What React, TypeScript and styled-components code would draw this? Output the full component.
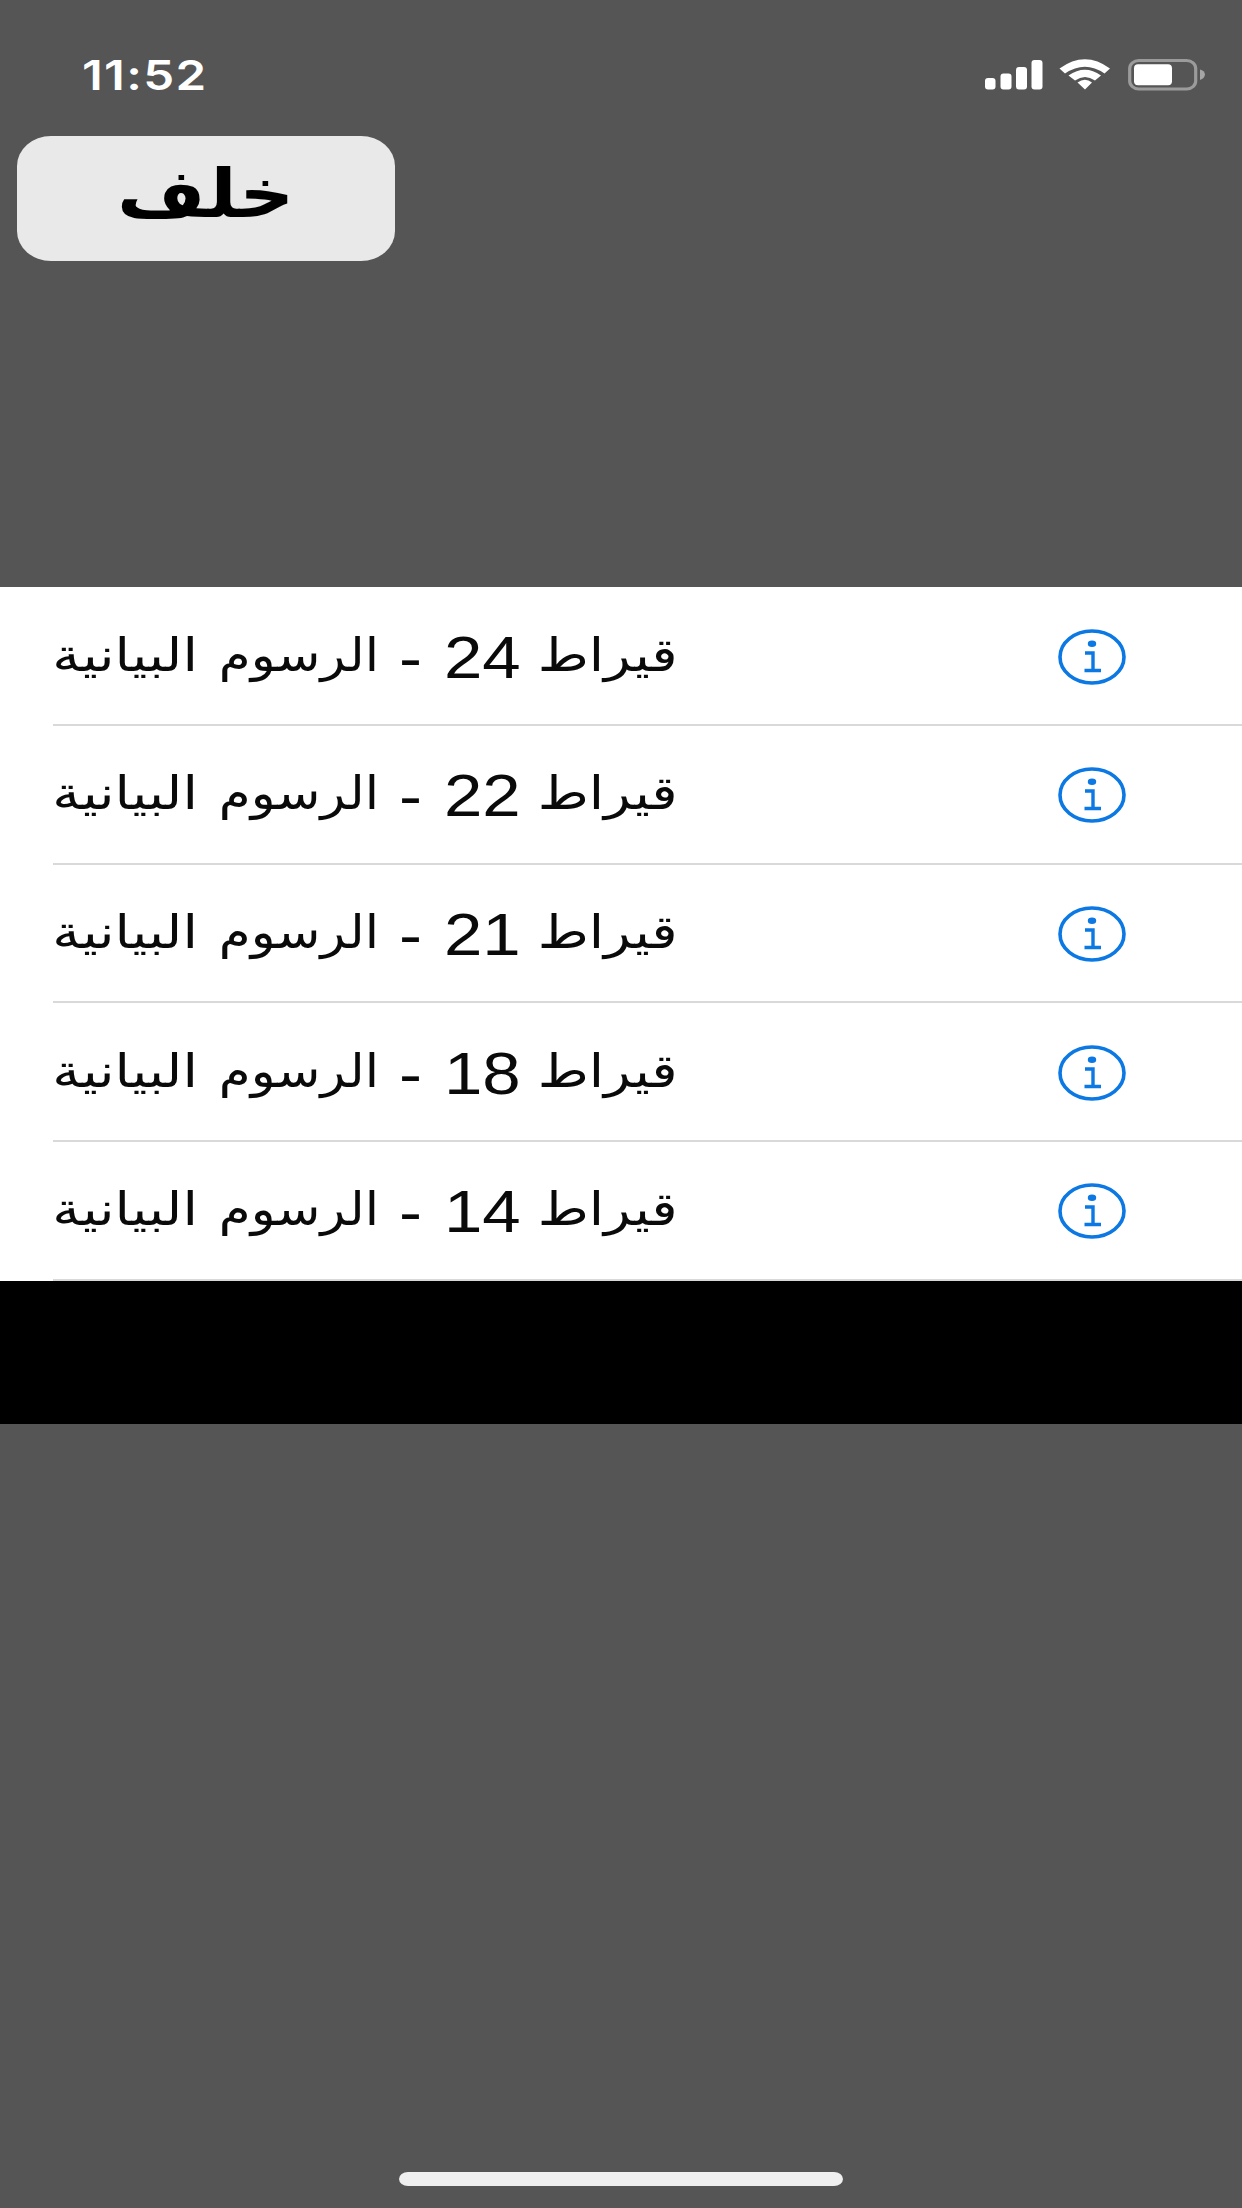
import React from "react";
import styled, { createGlobalStyle } from "styled-components";

const GlobalStyle = createGlobalStyle`
  html, body { margin: 0; padding: 0; background: #555555; }
  * { box-sizing: border-box; }
`;

const Screen = styled.main`
  width: 1242px;
  height: 2208px;
  display: flex;
  flex-direction: column;
  background: #555555;
  overflow: hidden;
  font-family: "Liberation Sans", "DejaVu Sans", sans-serif;
`;

const StatusBar = styled.header`
  height: 136px;
  flex: none;
  display: flex;
  justify-content: space-between;
  padding: 58px 37px 0 82px;
`;

const Clock = styled.time`
  font: 600 41px/34px Inter, sans-serif;
  color: #ffffff;
  white-space: nowrap;
  letter-spacing: 1.1px;
  transform: scaleX(1.2);
  transform-origin: left center;
`;

const StatusIcons = styled.svg`
  width: 222px;
  height: 34px;
  display: block;
`;

const Toolbar = styled.nav`
  height: 451.4px;
  flex: none;
  padding-left: 16.5px;
`;

const BackButton = styled.button`
  width: 378px;
  height: 125px;
  border: 0;
  padding: 0;
  display: flex;
  justify-content: center;
  background: #e9e9e9;
  border-radius: 34px / 30px;
  color: #000000;
`;

const BackLabel = styled.span`
  font: bold 67px/125px "DejaVu Sans", sans-serif;
  transform: translateY(-4px) scaleX(1.14);
`;

const List = styled.ul`
  list-style: none;
  margin: 0;
  padding: 0;
  flex: none;
  background: #ffffff;
`;

const Row = styled.li`
  height: 138.7px;
  margin-left: 53px;
  padding-right: 116px;
  display: flex;
  align-items: center;
  justify-content: space-between;
  border-bottom: 2px solid #d9d9d9;
`;

const Label = styled.div`
  display: flex;
  width: 622px;
  height: 68px;
  justify-content: space-between;
  color: #0a0a0a;
`;

const Piece = styled.span<{ $width: number }>`
  width: ${(p) => p.$width}px;
  display: flex;
  justify-content: flex-end;
  direction: ltr;
`;

const Word = styled.span<{ $stretch: number; $shift: number }>`
  font: 46px/68px "DejaVu Sans", sans-serif;
  white-space: nowrap;
  direction: rtl;
  transform: translate(${(p) => p.$shift}px, -1px) scaleX(${(p) => p.$stretch});
  transform-origin: right center;
`;

const Latin = styled.span`
  font: 60px/68px "Liberation Sans", Arial, sans-serif;
  white-space: nowrap;
  transform: translate(3px, 2px) scaleX(1.15);
  transform-origin: right center;
`;

const InfoButton = styled.button`
  border: 0;
  padding: 2px 0 0;
  background: none;
  display: flex;
`;

const Spacer = styled.section`
  height: 143.5px;
  flex: none;
  background: #000000;
`;

const Footer = styled.footer`
  flex: 1;
  display: flex;
  align-items: flex-end;
  justify-content: center;
  padding-bottom: 22px;
`;

const HomeIndicator = styled.div`
  width: 444px;
  height: 14px;
  border-radius: 9px / 7px;
  background: #efefef;
`;

function StatusGlyphs() {
  return (
    <StatusIcons viewBox="0 0 222 34" aria-hidden="true">
      <g fill="#ffffff">
        <rect x="2" y="20" width="10.500" height="11.500" rx="3" />
        <rect x="17.500" y="15.500" width="11" height="16" rx="3" />
        <rect x="33" y="9" width="11" height="22.500" rx="3" />
        <rect x="48.500" y="2" width="11" height="29.500" rx="3" />
        <path d="M76.500 10.500Q102-8 127 10.500L121.500 15.500Q102 2 82 15.500Z" />
        <path d="M85.500 17.500Q102 6 118 17.500L112 22.500Q102 15.500 92 22.500Z" />
        <path d="M94.500 24.500Q102 19 109 24.500L102 31.500Z" />
        <rect x="151" y="6.200" width="38" height="21" rx="4" />
      </g>
      <rect x="146.700" y="2.500" width="66" height="28.500" rx="9" ry="8" fill="none" stroke="#9b9b9b" strokeWidth="3.200" />
      <path d="M217 11.500Q221.500 12.500 222 16.500Q221.500 20.500 217 22Z" fill="#a6a6a6" />
    </StatusIcons>
  );
}

function InfoGlyph() {
  return (
    <svg width="68" height="56" viewBox="0 0 68 56" aria-hidden="true">
      <ellipse cx="34" cy="28" rx="32" ry="26" fill="none" stroke="#0b78e3" strokeWidth="3.600" />
      <ellipse cx="34" cy="14.700" rx="4.200" ry="3.300" fill="#0b78e3" />
      <path d="M27 24H35V41.500M26.500 41.500H43" fill="none" stroke="#0b78e3" strokeWidth="3.400" />
    </svg>
  );
}

const karats = ["24", "22", "21", "18", "14"];

function ChartRow({ karat }: { karat: string }) {
  return (
    <Row>
      <Label dir="rtl">
        <Piece $width={134}><Word $stretch={1.2} $shift={3}>قيراط</Word></Piece>
        <Piece $width={75}><Latin>{karat}</Latin></Piece>
        <Piece $width={20}><Latin>-</Latin></Piece>
        <Piece $width={157}><Word $stretch={1.12} $shift={3}>الرسوم</Word></Piece>
        <Piece $width={142}><Word $stretch={1.215} $shift={3}>البيانية</Word></Piece>
      </Label>
      <InfoButton aria-label="معلومات"><InfoGlyph /></InfoButton>
    </Row>
  );
}

export default function App() {
  return (
    <Screen>
      <GlobalStyle />
      <StatusBar>
        <Clock>11:52</Clock>
        <StatusGlyphs />
      </StatusBar>
      <Toolbar>
        <BackButton><BackLabel dir="rtl">خلف</BackLabel></BackButton>
      </Toolbar>
      <List>
        {karats.map((k) => <ChartRow key={k} karat={k} />)}
      </List>
      <Spacer />
      <Footer><HomeIndicator /></Footer>
    </Screen>
  );
}
